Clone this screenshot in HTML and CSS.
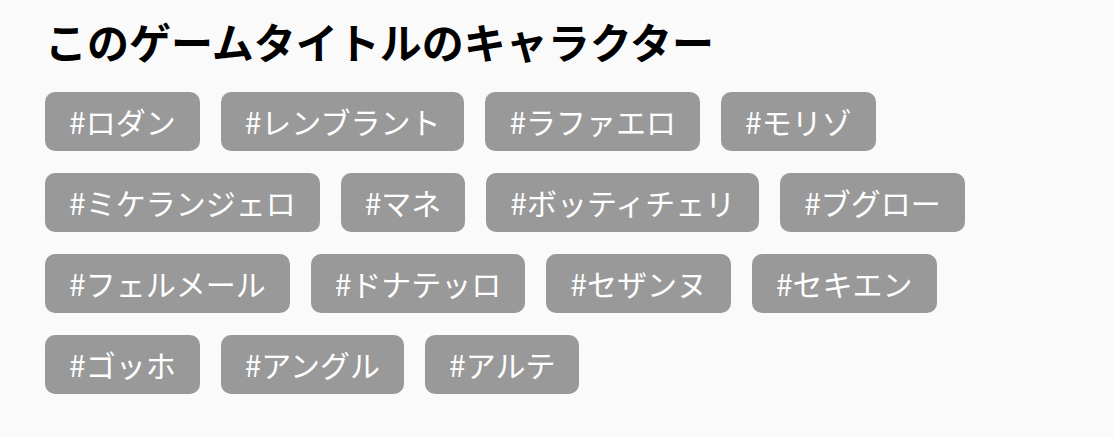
FILE: index.html
```html
<!DOCTYPE html>
<html lang="ja">
<head>
<meta charset="utf-8">
<link rel="stylesheet" href="styles.css">
</head>
<body>
<div class="page">
  <h1 class="title">このゲームタイトルのキャラクター</h1>
  <div class="tags">
    <span class="tag">#ロダン</span>
    <span class="tag">#レンブラント</span>
    <span class="tag">#ラファエロ</span>
    <span class="tag">#モリゾ</span>
    <span class="tag">#ミケランジェロ</span>
    <span class="tag">#マネ</span>
    <span class="tag">#ボッティチェリ</span>
    <span class="tag">#ブグロー</span>
    <span class="tag">#フェルメール</span>
    <span class="tag">#ドナテッロ</span>
    <span class="tag">#セザンヌ</span>
    <span class="tag">#セキエン</span>
    <span class="tag">#ゴッホ</span>
    <span class="tag">#アングル</span>
    <span class="tag">#アルテ</span>
  </div>
</div>
</body>
</html>
```
FILE: styles.css
```css
html, body {
  margin: 0;
  padding: 0;
  background: #fafafa;
}
.page {
  padding: 16px 45px 0 45px;
  font-family: "Noto Sans CJK JP", "Noto Sans", sans-serif;
}
.title {
  margin: 0 0 26px 0;
  font-size: 42px;
  font-weight: 700;
  line-height: 50px;
  color: #000;
}
.tags {
  display: flex;
  flex-wrap: wrap;
  gap: 22px 21px;
  max-width: 1000px;
}
.tag {
  display: inline-block;
  background: #999999;
  color: #ffffff;
  font-size: 30px;
  font-weight: 400;
  line-height: 59px;
  height: 59px;
  padding: 0 24px;
  border-radius: 10px;
  white-space: nowrap;
}
```
